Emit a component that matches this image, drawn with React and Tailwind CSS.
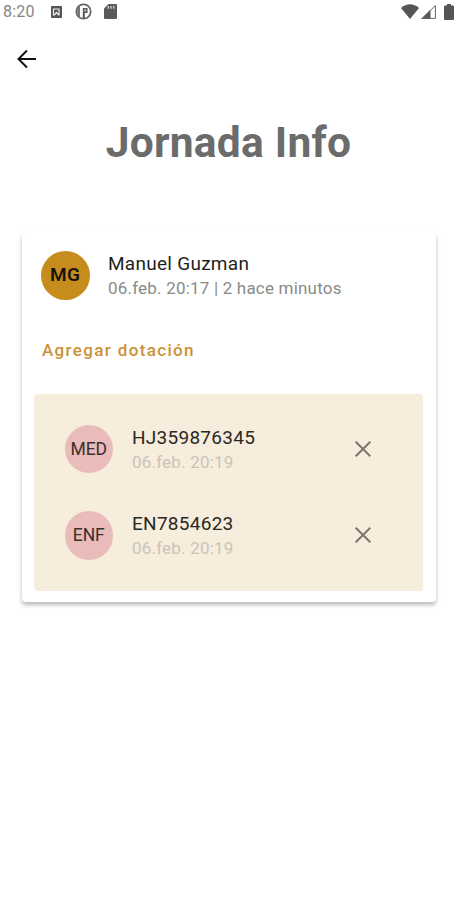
const StatusBar = () => {
  return (
    <div className="flex h-[23px] items-center pl-[3px] pr-[2px]">
      <span className="w-[48px] text-[16px] leading-[23px] tracking-[0.2px] text-[#858585]">8:20</span>
      <svg width="11" height="12" viewBox="0 0 11 12">
        <rect width="11" height="12" rx="1" fill="#555" />
        <path d="M2.500 9.500V3H8v6.500M3 9.300L5.500 6.500l2.500 2.800" fill="none" stroke="#eee" strokeWidth="1.200" />
      </svg>
      <svg className="ml-[13px]" width="17" height="17" viewBox="0 0 17 17">
        <circle cx="8.500" cy="8.500" r="7.200" fill="#fff" stroke="#666" strokeWidth="1.700" />
        <path d="M2 5.500L5 2v12.500L2.500 12z" fill="#777" />
        <path d="M7.800 5h4.700v5H9.800v5H7.800z" fill="#555" />
        <path d="M9.300 6.300h1.600v2.200H9.300z" fill="#ccc" />
      </svg>
      <svg className="ml-[12px]" width="13" height="15" viewBox="0 0 13 15">
        <path d="M4.500 0H12q1 0 1 1v13q0 1-1 1H1q-1 0-1-1V4.500z" fill="#5a5a5a" />
        <path d="M4.300 2v2.700M7 2v2.700M9.700 2v2.700" stroke="#ccc" strokeWidth="1.400" />
      </svg>
      <svg className="ml-auto" width="18" height="15" viewBox="0 0 18 15">
        <path d="M9 15L0 4Q9-3.500 18 4z" fill="#555" />
      </svg>
      <svg className="ml-[2px]" width="15" height="15" viewBox="0 0 15 15">
        <path d="M0 15L9.500 5.500V15z" fill="#555" />
        <path d="M1.500 14.400L14.400 1.500V14.400z" fill="none" stroke="#666" strokeWidth="1" />
      </svg>
      <svg className="ml-[8px] mr-[1px]" width="10" height="16" viewBox="0 0 10 16">
        <path d="M3 0h4v1.500h2q1 0 1 1V15q0 1-1 1H1q-1 0-1-1V2.500q0-1 1-1h2z" fill="#555" />
      </svg>
    </div>
  );
};

const items = [
  { id: 1, type: "MED", code: "HJ359876345", date: "06.feb. 20:19" },
  { id: 2, type: "ENF", code: "EN7854623", date: "06.feb. 20:19" },
];

const CrewRow = ({ item }) => {
  return (
    <div className="flex h-[86.5px] items-center">
      <div className="flex size-[48.5px] shrink-0 items-center justify-center rounded-full bg-[#eabcb9] text-[17.5px] text-[#3a302f]">
        {item.type}
      </div>
      <div className="ml-[19px] flex-1 pt-[2px]">
        <p className="text-[19px] leading-[25px] tracking-[0.27px] text-[#2b2823]">{item.code}</p>
        <p className="text-[17px] leading-[25px] tracking-[0.2px] text-[#cbc4b6]">{item.date}</p>
      </div>
      <button className="mr-[52px]" aria-label="Quitar">
        <svg width="16" height="16" viewBox="0 0 16 16">
          <path d="M0.700 0.700l14.600 14.600M15.300 0.700L0.700 15.300" stroke="#7d776c" strokeWidth="2" />
        </svg>
      </button>
    </div>
  );
};

const App = () => {
  return (
    <div className="h-[900px] w-[457px] overflow-hidden bg-white font-['Roboto','Open_Sans',sans-serif]">
      <StatusBar />
      <header className="flex h-[72px] items-center pl-[17px]">
        <svg width="20" height="20" viewBox="0 0 20 20">
          <path d="M10 1.500L1.500 10l8.500 8.500M1.500 10H19" fill="none" stroke="#111" strokeWidth="2" />
        </svg>
      </header>
      <h1 className="mt-[21px] text-center text-[42.5px] font-bold leading-[53px] tracking-[0.25px] text-[#6b6b6b]">
        Jornada Info
      </h1>

      <section className="ml-[22px] mt-[63px] h-[370px] w-[414px] rounded-[4px] bg-white px-[12px] shadow-[0_3px_4px_rgba(0,0,0,0.27)]">
        <div className="flex h-[87px] items-center pl-[7px]">
          <div className="flex size-[48.5px] shrink-0 items-center justify-center rounded-full bg-[#c78c1e] text-[19px] font-semibold tracking-[0.5px] text-[#17130a]">
            MG
          </div>
          <div className="ml-[18.5px] pt-[1px]">
            <p className="text-[19px] leading-[25px] tracking-[0.27px] text-[#1f1f1f]">Manuel Guzman</p>
            <p className="text-[17px] leading-[25px] tracking-[0.2px] text-[#8a8a8a]">06.feb. 20:17 | 2 hace minutos</p>
          </div>
        </div>
        <button className="ml-[8px] mt-[19px] block text-[17px] font-medium leading-6 tracking-[1.35px] text-[#cb9136]">
          Agregar dotación
        </button>
        <div className="mt-[32px] h-[197px] w-[389px] rounded-[4px] bg-[#f6eddd] pl-[30.5px] pt-[11.5px]">
          {items.map((item) => (
            <CrewRow key={item.id} item={item} />
          ))}
        </div>
      </section>
    </div>
  );
};

export default App;
